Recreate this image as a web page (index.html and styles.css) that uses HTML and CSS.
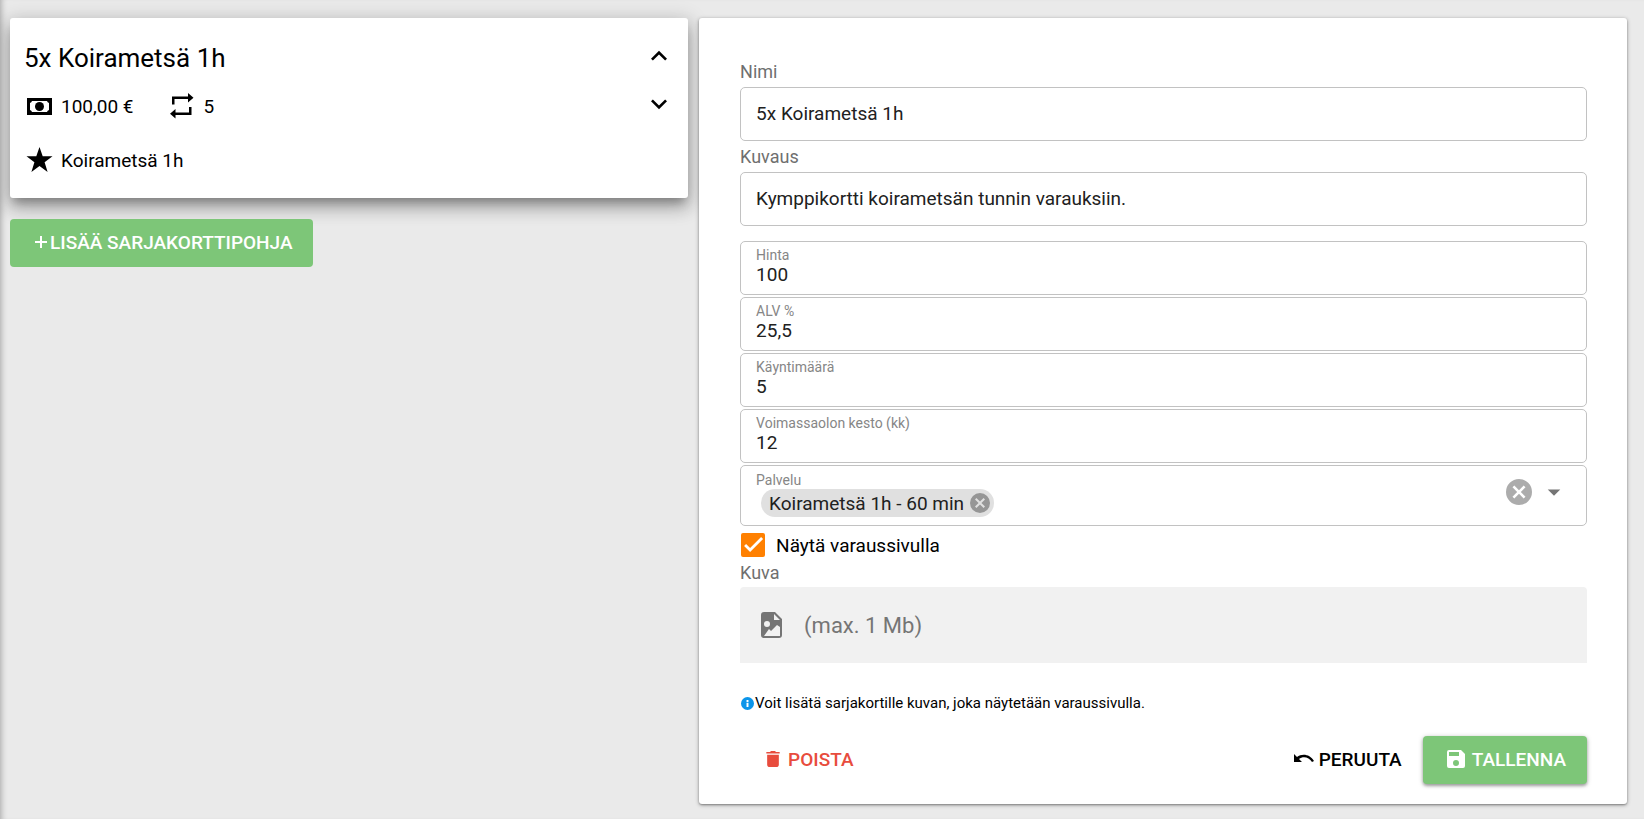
FILE: index.html
```html
<!DOCTYPE html>
<html lang="fi">
<head>
<meta charset="utf-8">
<title>Sarjakortit</title>
<link rel="stylesheet" href="styles.css">
</head>
<body>
<main class="page">
  <section class="list">
    <article class="pass-card">
      <div class="pass-info">
        <h2 class="pass-title">5x Koirametsä 1h</h2>
        <div class="pass-row">
          <span class="fact"><svg class="icon-md" viewBox="0 0 28 28"><path fill-rule="evenodd" d="M2 6h25v17H2zM7 9a3 3 0 0 1-2 2v7a3 3 0 0 1 2 2h15a3 3 0 0 1 2-2v-7a3 3 0 0 1-2-2z"/><circle cx="14.500" cy="14.500" r="4.500"/></svg>100,00 €</span>
          <span class="fact"><svg class="icon-md" viewBox="0 0 28 28"><path d="M4 12.500V4.500h16V1l5.500 4.700-5.500 4.700V7H6.500v5.500zM23.500 15v8H7.500v3.500L2 21.800l5.500-4.700v3.400H21V15z"/></svg>5</span>
        </div>
        <div class="pass-row">
          <span class="fact"><svg class="icon-md" viewBox="0 0 28 28"><path d="M14.500 1l3.200 9.200H27.500l-7.900 6 3 9.800-8.100-5.900L6.400 26l3-9.800-7.900-6h9.800z"/></svg>Koirametsä 1h</span>
        </div>
      </div>
      <div class="pass-order">
        <button class="order-btn" type="button" aria-label="Siirrä ylös"><svg viewBox="0 0 24 24"><path d="M7.410 15.410L12 10.830l4.590 4.580L18 14l-6-6-6 6z"/></svg></button>
        <button class="order-btn" type="button" aria-label="Siirrä alas"><svg viewBox="0 0 24 24"><path d="M7.410 8.590L12 13.170l4.590-4.580L18 10l-6 6-6-6z"/></svg></button>
      </div>
    </article>
    <button class="btn btn-green btn-add" type="button"><svg class="icon-xs" viewBox="0 0 14 14"><path d="M6 1h2v5h5v2H8v5H6V8H1V6h5z"/></svg>LISÄÄ SARJAKORTTIPOHJA</button>
  </section>

  <form class="editor">
    <label class="label" for="name">Nimi</label>
    <input class="box" id="name" type="text" value="5x Koirametsä 1h">
    <label class="label" for="desc">Kuvaus</label>
    <input class="box" id="desc" type="text" value="Kymppikortti koirametsän tunnin varauksiin.">

    <div class="stack">
      <div class="field"><label class="float" for="price">Hinta</label><input class="value" id="price" type="text" value="100"></div>
      <div class="field"><label class="float" for="vat">ALV %</label><input class="value" id="vat" type="text" value="25,5"></div>
      <div class="field"><label class="float" for="visits">Käyntimäärä</label><input class="value" id="visits" type="text" value="5"></div>
      <div class="field"><label class="float" for="months">Voimassaolon kesto (kk)</label><input class="value" id="months" type="text" value="12"></div>
      <div class="field field-select" role="group" aria-labelledby="service-label">
        <div class="select-main">
          <span class="float" id="service-label">Palvelu</span>
          <span class="chip">Koirametsä 1h - 60 min<button class="chip-x" type="button" aria-label="Poista valinta"><svg viewBox="2 2 20 20"><path d="M12 2a10 10 0 1 0 0 20 10 10 0 0 0 0-20zm5 13.590L15.590 17 12 13.410 8.410 17 7 15.590 10.590 12 7 8.410 8.410 7 12 10.590 15.590 7 17 8.410 13.410 12z"/></svg></button></span>
        </div>
        <button class="clear" type="button" aria-label="Tyhjennä"><svg viewBox="2 2 20 20"><path d="M12 2a10 10 0 1 0 0 20 10 10 0 0 0 0-20zm5 13.590L15.590 17 12 13.410 8.410 17 7 15.590 10.590 12 7 8.410 8.410 7 12 10.590 15.590 7 17 8.410 13.410 12z"/></svg></button>
        <button class="caret" type="button" aria-haspopup="listbox" aria-label="Avaa valikko"><svg viewBox="0 0 24 24"><path d="M7 10l5 5 5-5z"/></svg></button>
      </div>
    </div>

    <label class="check"><input class="tick" type="checkbox" checked>Näytä varaussivulla</label>

    <span class="label label-image">Kuva</span>
    <button class="upload" type="button"><svg class="icon-file" viewBox="0 0 22 28"><path fill-rule="evenodd" d="M3 1h11l7 7v16a3 3 0 0 1-3 3H3a3 3 0 0 1-3-3V4a3 3 0 0 1 3-3zM13 3v6h6zM6 10a3 3 0 1 0 0 6 3 3 0 0 0 0-6zM3 25h16v-9l-3-2-6 6-2-2z"/></svg>(max. 1 Mb)</button>

    <p class="hint"><svg class="info" viewBox="2 2 20 20"><path d="M12 2a10 10 0 1 0 0 20 10 10 0 0 0 0-20zm1.500 15.500h-3V11h3zm0-8h-3V6.500h3z"/></svg>Voit lisätä sarjakortille kuvan, joka näytetään varaussivulla.</p>

    <div class="actions">
      <button class="btn btn-delete" type="button"><svg class="icon-sm" viewBox="0 0 24 24"><path d="M5 19c0 1.500.9 2.500 2 2.500h10c1.100 0 2-1 2-2.500V7H5zM20 3.500h-4.500l-1-1h-5l-1 1H4v2h16z"/></svg>POISTA</button>
      <button class="btn btn-cancel" type="button"><svg class="icon-sm" viewBox="0 0 20 20"><path d="M0 5l3 3c5-4 13-3 17 4l-2 1c-3-5-9-6-13-3l3 3H0z"/></svg>PERUUTA</button>
      <button class="btn btn-green btn-save" type="submit"><svg class="icon-sm" viewBox="2 2 20 20"><path d="M17 3H5a2 2 0 0 0-2 2v14a2 2 0 0 0 2 2h14a2 2 0 0 0 2-2V7zm-5 16a3 3 0 1 1 0-6 3 3 0 0 1 0 6zm3-10H5V5h10z"/></svg>TALLENNA</button>
    </div>
  </form>
</main>
</body>
</html>
```
FILE: styles.css
```css
* { box-sizing: border-box; }

body {
  margin: 0;
  min-height: 100vh;
  background: #eaeaea;
  box-shadow: inset 6px 0 6px -5px rgba(0, 0, 0, 0.3);
  color: #000;
  font-family: Roboto, "Liberation Sans", sans-serif;
  font-size: 19px;
}

button, input { font: inherit; color: inherit; }
button { border: 0; padding: 0; background: none; cursor: pointer; }
svg { display: block; fill: currentColor; flex: none; }

.page {
  display: grid;
  grid-template-columns: minmax(0, 19fr) minmax(0, 26fr);
  gap: 11px;
  align-items: start;
  padding: 18px 17px 15px 10px;
}

.list { display: grid; justify-items: start; gap: 21px; }

.pass-card {
  display: flex;
  justify-content: space-between;
  width: 100%;
  padding: 16px 13px 14px 14px;
  border-radius: 3px;
  background: #fff;
  box-shadow: 0 8px 9px -4px rgba(0, 0, 0, 0.25), 0 10px 18px 1px rgba(0, 0, 0, 0.18), 0 4px 20px 3px rgba(0, 0, 0, 0.16);
}
.pass-title { margin: 0; font-size: 26px; line-height: 48px; font-weight: 400; }
.pass-row { display: flex; gap: 34px; height: 48px; padding-left: 1px; }
.pass-row + .pass-row { margin-top: 6px; }
.fact { display: flex; align-items: center; gap: 8px; }
.icon-md { width: 28px; height: 28px; }
.pass-order { display: flex; flex-direction: column; gap: 16px; padding-top: 6px; }
.order-btn { width: 32px; height: 32px; }

.btn {
  display: flex;
  align-items: center;
  height: 48px;
  padding-bottom: 2px;
  border-radius: 4px;
  font-size: 19px;
  font-weight: 500;
}
.btn-green { background: #7dc678; color: #fff; }
.btn-add { gap: 2px; padding-left: 24px; padding-right: 20px; }
.icon-xs { width: 14px; height: 14px; }
.icon-sm { width: 20px; height: 20px; }
.icon-file { width: 22px; height: 28px; }

.editor {
  display: flex;
  flex-direction: column;
  padding: 38px 40px 20px 41px;
  border-radius: 3px;
  background: #fff;
  box-shadow: 0 1px 4px rgba(0, 0, 0, 0.3), 0 1px 2px rgba(0, 0, 0, 0.3);
}
.label { padding: 4px 0; color: #6f6f6f; font-size: 18px; line-height: 23px; }
.box, .field { border: 1px solid #c2c2c2; border-radius: 5px; background: #fff; }
.box { height: 54px; padding: 0 15px 2px; color: #212121; }

.stack { display: grid; gap: 2px; margin-top: 15px; }
.field { height: 54px; padding: 5px 15px; color: #212121; }
.float { display: block; color: #868686; font-size: 14px; line-height: 17px; }
.value { display: block; width: 100%; height: 21px; padding: 0; border: 0; outline: 0; background: none; }

.field-select { display: flex; align-items: center; height: 61px; padding: 6px 17px 13px 15px; }
.select-main { flex: 1; align-self: start; }
.chip {
  display: inline-flex;
  align-items: center;
  gap: 6px;
  height: 28px;
  margin-left: 5px;
  padding: 0 4px 0 8px;
  border-radius: 14px;
  background: #e0e0e0;
}
.chip-x { width: 20px; height: 20px; color: #969696; }
.clear { width: 26px; height: 26px; color: #acacac; }
.caret { width: 30px; height: 30px; margin-left: 7px; color: #757575; }

.check { display: flex; align-items: center; gap: 11px; height: 32px; margin-top: 3px; padding-left: 1px; }
.tick {
  appearance: none;
  display: grid;
  place-items: center;
  width: 24px;
  height: 24px;
  margin: 0;
  border: 2px solid #757575;
  border-radius: 2px;
}
.tick:checked { border-color: #ff8000; background: #ff8000; }
.tick:checked::before {
  content: "";
  width: 20px;
  height: 20px;
  background: #fff;
  clip-path: polygon(1px 11px, 3px 9px, 7px 13px, 18px 2px, 20px 4px, 7px 17px);
}

.label-image { padding: 0 0 3px; }
.upload {
  display: flex;
  align-items: center;
  gap: 21px;
  height: 76px;
  padding: 0 21px;
  border-radius: 4px 4px 0 0;
  background: #f1f1f1;
  color: #757575;
  font-size: 22px;
}
.hint { display: flex; align-items: center; gap: 1px; margin: 30px 0 22px; padding-left: 1px; font-size: 15px; line-height: 21px; }
.info { width: 13px; height: 13px; color: #0b95ea; }

.actions { display: flex; }
.btn-delete { gap: 5px; padding-left: 23px; padding-right: 23px; color: #e84c3d; }
.btn-cancel { gap: 5px; margin-left: auto; padding-left: 22px; padding-right: 21px; }
.btn-save { gap: 6px; padding-left: 23px; padding-right: 21px; box-shadow: 0 1px 5px rgba(0, 0, 0, 0.25), 0 2px 3px rgba(0, 0, 0, 0.25); }
```
